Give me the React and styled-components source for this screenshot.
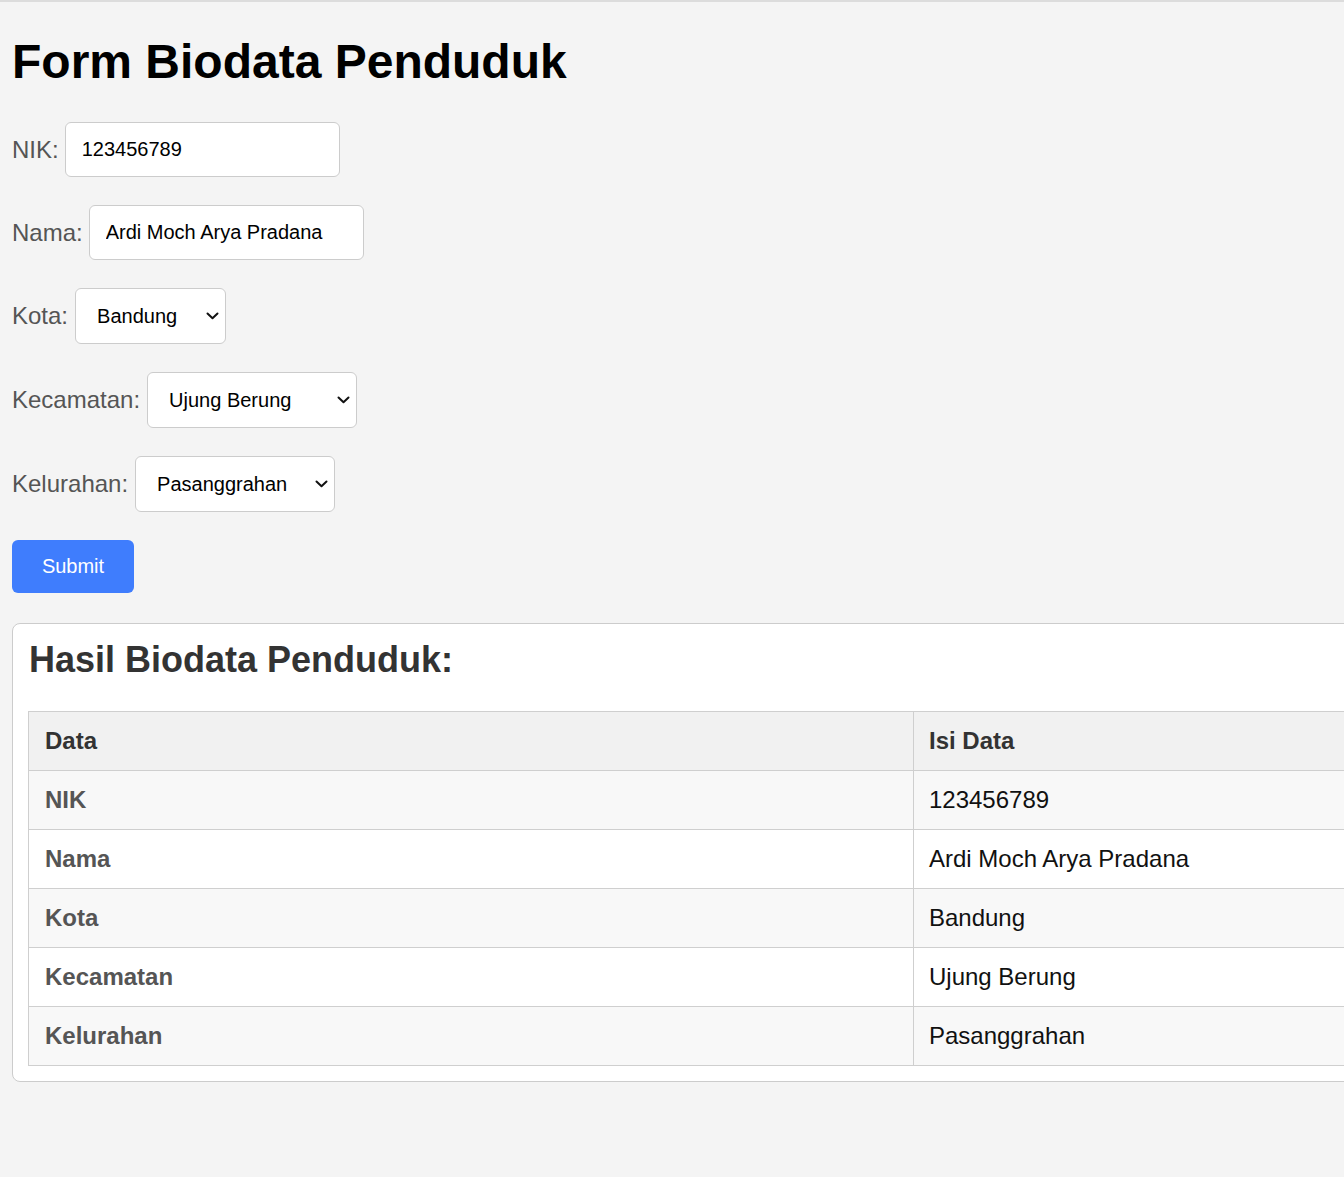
import React from "react";
import styled, { createGlobalStyle } from "styled-components";

const GlobalStyle = createGlobalStyle`
  html, body { margin: 0; padding: 0; overflow-x: hidden; }
  body {
    background: #f4f4f4;
    font-family: "Liberation Sans", Arial, sans-serif;
    font-size: 24px;
    color: #000;
  }
`;

const Page = styled.div`
  border-top: 2px solid #dcdcdc;
  padding: 0 12px 40px;
  min-height: 1175px;
  box-sizing: border-box;
`;

const Title = styled.h1`
  margin: 32px 0 33px;
  font-size: 48px;
  line-height: 55px;
  font-weight: bold;
  color: #000;
`;

const Form = styled.form`
  display: flex;
  flex-direction: column;
  align-items: flex-start;
`;

const Group = styled.div`
  display: flex;
  align-items: center;
  gap: ${(p) => (p.$select ? 7 : 6)}px;
  margin-bottom: 28px;
`;

const Label = styled.label`
  color: #555;
  font-size: 24px;
  line-height: 28px;
`;

const TextInput = styled.input`
  box-sizing: border-box;
  width: 275px;
  height: 55px;
  padding: 0 16px;
  border: 1px solid #ccc;
  border-radius: 6px;
  background: #fff;
  font-family: "Liberation Sans", Arial, sans-serif;
  font-size: 20px;
  color: #000;
  outline: none;
`;

const SelectWrap = styled.div`
  position: relative;
  display: inline-flex;
`;

const Select = styled.select`
  appearance: none;
  -webkit-appearance: none;
  box-sizing: border-box;
  width: ${(p) => p.$w}px;
  height: 56px;
  padding: 0 30px 0 21px;
  border: 1px solid #ccc;
  border-radius: 6px;
  background: #fff;
  font-family: "Liberation Sans", Arial, sans-serif;
  font-size: 20px;
  color: #000;
  outline: none;
`;

const Chevron = styled.svg`
  position: absolute;
  right: 7px;
  top: 50%;
  width: 13px;
  height: 8px;
  margin-top: -4px;
  pointer-events: none;
`;

const SubmitButton = styled.button`
  box-sizing: border-box;
  width: 122px;
  height: 53px;
  border: none;
  border-radius: 6px;
  background: #3f7dfd;
  color: #fff;
  font-family: "Liberation Sans", Arial, sans-serif;
  font-size: 20px;
  cursor: pointer;
`;

const Panel = styled.section`
  box-sizing: border-box;
  margin-top: 30px;
  width: 1802px;
  padding: 15px;
  background: #fff;
  border: 1px solid #ccc;
  border-radius: 8px;
`;

const PanelTitle = styled.h2`
  margin: 0 0 31px;
  padding-left: 1px;
  font-size: 36px;
  line-height: 41px;
  font-weight: bold;
  color: #333;
`;

const Table = styled.table`
  width: 100%;
  border-collapse: collapse;
  table-layout: fixed;
  font-size: 24px;
`;

const Row = styled.tr`
  background: ${(p) => (p.$head ? "#f1f1f1" : p.$alt ? "#f8f8f8" : "#fff")};
`;

const HeadCell = styled.th`
  width: 50%;
  text-align: left;
  padding: 15px 15px 15px ${(p) => (p.$second ? 15 : 16)}px;
  line-height: 28px;
  border: 1px solid #cfcfcf;
  color: ${(p) => (p.$muted ? "#555" : "#333")};
  font-weight: bold;
`;

const Cell = styled.td`
  padding: 15px;
  line-height: 28px;
  border: 1px solid #cfcfcf;
  color: #111;
`;

function ChevronIcon() {
  return (
    <Chevron viewBox="0 0 13 8" fill="none">
      <path d="M1.5 1.5 L6.5 6.3 L11.5 1.5" stroke="#111" strokeWidth="2" strokeLinecap="round" strokeLinejoin="round" />
    </Chevron>
  );
}

const rows = [
  ["NIK", "123456789"],
  ["Nama", "Ardi Moch Arya Pradana"],
  ["Kota", "Bandung"],
  ["Kecamatan", "Ujung Berung"],
  ["Kelurahan", "Pasanggrahan"],
];

export default function App() {
  return (
    <Page>
      <GlobalStyle />
      <Title>Form Biodata Penduduk</Title>
      <Form onSubmit={(e) => e.preventDefault()}>
        <Group>
          <Label htmlFor="nik">NIK:</Label>
          <TextInput id="nik" defaultValue="123456789" />
        </Group>
        <Group>
          <Label htmlFor="nama">Nama:</Label>
          <TextInput id="nama" defaultValue="Ardi Moch Arya Pradana" />
        </Group>
        <Group $select>
          <Label htmlFor="kota">Kota:</Label>
          <SelectWrap>
            <Select id="kota" $w={151} defaultValue="Bandung">
              <option>Bandung</option>
            </Select>
            <ChevronIcon />
          </SelectWrap>
        </Group>
        <Group $select>
          <Label htmlFor="kec">Kecamatan:</Label>
          <SelectWrap>
            <Select id="kec" $w={210} defaultValue="Ujung Berung">
              <option>Ujung Berung</option>
            </Select>
            <ChevronIcon />
          </SelectWrap>
        </Group>
        <Group $select>
          <Label htmlFor="kel">Kelurahan:</Label>
          <SelectWrap>
            <Select id="kel" $w={200} defaultValue="Pasanggrahan">
              <option>Pasanggrahan</option>
            </Select>
            <ChevronIcon />
          </SelectWrap>
        </Group>
        <SubmitButton type="submit">Submit</SubmitButton>
      </Form>
      <Panel>
        <PanelTitle>Hasil Biodata Penduduk:</PanelTitle>
        <Table>
          <thead>
            <Row $head>
              <HeadCell>Data</HeadCell>
              <HeadCell $second>Isi Data</HeadCell>
            </Row>
          </thead>
          <tbody>
            {rows.map(([k, v], i) => (
              <Row key={k} $alt={i % 2 === 0}>
                <HeadCell as="td" $muted>{k}</HeadCell>
                <Cell>{v}</Cell>
              </Row>
            ))}
          </tbody>
        </Table>
      </Panel>
    </Page>
  );
}
